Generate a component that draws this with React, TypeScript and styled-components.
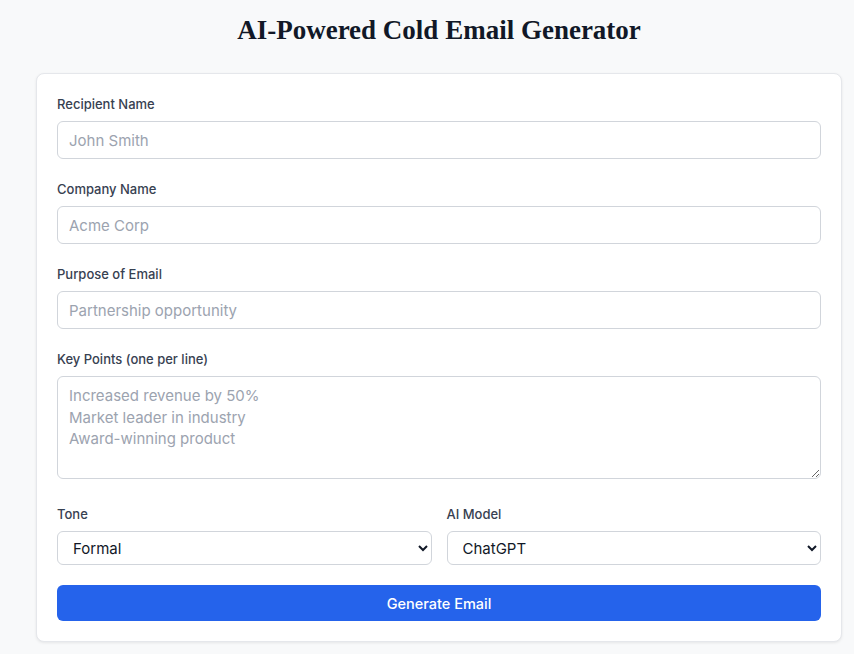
import React from "react";
import styled, { createGlobalStyle } from "styled-components";

const Global = createGlobalStyle`
  html, body { margin: 0; padding: 0; }
  body {
    background: #f8f9fa;
    font-family: Inter, "Noto Sans", sans-serif;
  }
`;

const Page = styled.div`
  padding: 15px 12px 20px 36px;
`;

const Title = styled.h1`
  margin: 0 0 28px;
  text-align: center;
  font-family: "Liberation Serif", serif;
  font-size: 27px;
  line-height: 30px;
  font-weight: 700;
  color: #111827;
`;

const Card = styled.form`
  background: #ffffff;
  border: 1px solid #e5e7eb;
  border-radius: 8px;
  box-shadow: 0 1px 3px rgba(0, 0, 0, 0.08);
  padding: 20px 20px 20px;
  display: flex;
  flex-direction: column;
`;

const Field = styled.div`
  display: flex;
  flex-direction: column;
  margin-bottom: 20px;
`;

const Label = styled.label`
  font-size: 13px;
  line-height: 20px;
  font-weight: 500;
  color: #374151;
  margin-bottom: 7px;
`;

const Input = styled.input`
  box-sizing: border-box;
  height: 38px;
  padding: 8px 11px;
  border: 1px solid #d1d5db;
  border-radius: 6px;
  font-family: Inter, sans-serif;
  font-size: 15px;
  color: #111827;
  outline: none;
  &::placeholder { color: #9ca3af; }
`;

const TextArea = styled.textarea`
  box-sizing: border-box;
  display: block;
  height: 103px;
  padding: 8px 11px;
  border: 1px solid #d1d5db;
  border-radius: 6px;
  font-family: Inter, sans-serif;
  font-size: 15px;
  line-height: 21.5px;
  color: #111827;
  outline: none;
  resize: vertical;
  margin-bottom: 5px;
  &::placeholder { color: #9ca3af; }
`;

const Row = styled.div`
  display: grid;
  grid-template-columns: 1fr 1fr;
  gap: 15px;
`;

const Select = styled.select`
  box-sizing: border-box;
  height: 34px;
  padding: 0 8px 0 11px;
  border: 1px solid #d1d5db;
  border-radius: 6px;
  background: #ffffff;
  font-family: Inter, sans-serif;
  font-size: 15px;
  color: #111827;
  outline: none;
`;

const Button = styled.button`
  height: 36px;
  border: none;
  border-radius: 6px;
  background: #2563eb;
  color: #ffffff;
  font-family: Inter, sans-serif;
  font-size: 14.5px;
  font-weight: 500;
  cursor: pointer;
`;

export default function App() {
  return (
    <>
      <Global />
      <Page>
        <Title>AI-Powered Cold Email Generator</Title>
        <Card onSubmit={(e) => e.preventDefault()}>
          <Field>
            <Label>Recipient Name</Label>
            <Input placeholder="John Smith" />
          </Field>
          <Field>
            <Label>Company Name</Label>
            <Input placeholder="Acme Corp" />
          </Field>
          <Field>
            <Label>Purpose of Email</Label>
            <Input placeholder="Partnership opportunity" />
          </Field>
          <Field>
            <Label>Key Points (one per line)</Label>
            <TextArea
              placeholder={"Increased revenue by 50%\nMarket leader in industry\nAward-winning product"}
            />
          </Field>
          <Row>
            <Field>
              <Label>Tone</Label>
              <Select defaultValue="formal">
                <option value="formal">Formal</option>
                <option value="friendly">Friendly</option>
                <option value="casual">Casual</option>
              </Select>
            </Field>
            <Field>
              <Label>AI Model</Label>
              <Select defaultValue="chatgpt">
                <option value="chatgpt">ChatGPT</option>
                <option value="claude">Claude</option>
                <option value="gemini">Gemini</option>
              </Select>
            </Field>
          </Row>
          <Button type="submit">Generate Email</Button>
        </Card>
      </Page>
    </>
  );
}
